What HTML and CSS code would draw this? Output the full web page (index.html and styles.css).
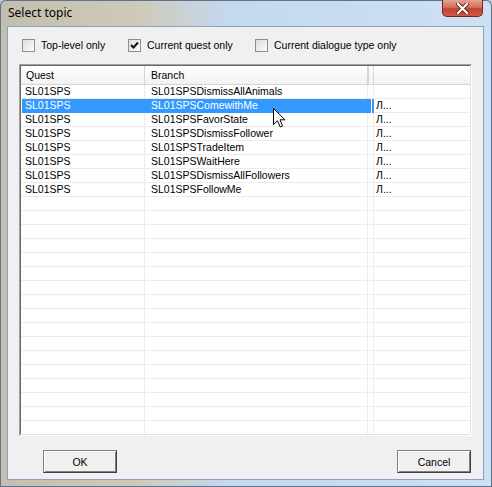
FILE: index.html
```html
<!DOCTYPE html>
<html lang="en">
<head>
  <meta charset="UTF-8">
  <title>Select topic</title>
  <link rel="stylesheet" href="styles.css">
</head>
<body>
  <div class="window">
    <!-- barra de título -->
    <div class="titlebar">
      <span class="title">Select topic</span>
      <button class="close">
        <svg width="13" height="11" viewBox="0 0 13 11">
          <path d="M2 1 L11 10 M11 1 L2 10" stroke="#5a1f18" stroke-width="4" stroke-linecap="square"/>
          <path d="M2 1 L11 10 M11 1 L2 10" stroke="#fff" stroke-width="2.2" stroke-linecap="square"/>
        </svg>
      </button>
    </div>

    <div class="client">
      <!-- filtros -->
      <div class="filters">
        <label class="check"><span class="box"></span>Top-level only</label>
        <label class="check"><span class="box checked">
          <svg width="9" height="9" viewBox="0 0 9 9"><path d="M1 4 L3.5 6.5 L8 1.5" fill="none" stroke="#111" stroke-width="2"/></svg>
        </span>Current quest only</label>
        <label class="check"><span class="box"></span>Current dialogue type only</label>
      </div>

      <!-- lista de tópicos -->
      <div class="list">
        <div class="list-inner">
          <div class="list-head">
            <div class="hcell">Quest</div>
            <div class="hcell">Branch</div>
            <div class="hcell"></div>
            <div class="hcell"></div>
          </div>
          <div class="list-body">
            <div class="row"><div class="cell">SL01SPS</div><div class="cell">SL01SPSDismissAllAnimals</div><div class="cell"></div><div class="cell"></div></div>
            <div class="row selected"><div class="cell">SL01SPS</div><div class="cell">SL01SPSComewithMe</div><div class="cell mini"></div><div class="cell">Л...</div></div>
            <div class="row"><div class="cell">SL01SPS</div><div class="cell">SL01SPSFavorState</div><div class="cell"></div><div class="cell">Л...</div></div>
            <div class="row"><div class="cell">SL01SPS</div><div class="cell">SL01SPSDismissFollower</div><div class="cell"></div><div class="cell">Л...</div></div>
            <div class="row"><div class="cell">SL01SPS</div><div class="cell">SL01SPSTradeItem</div><div class="cell"></div><div class="cell">Л...</div></div>
            <div class="row"><div class="cell">SL01SPS</div><div class="cell">SL01SPSWaitHere</div><div class="cell"></div><div class="cell">Л...</div></div>
            <div class="row"><div class="cell">SL01SPS</div><div class="cell">SL01SPSDismissAllFollowers</div><div class="cell"></div><div class="cell">Л...</div></div>
            <div class="row"><div class="cell">SL01SPS</div><div class="cell">SL01SPSFollowMe</div><div class="cell"></div><div class="cell">Л...</div></div>
          </div>
        </div>
      </div>

      <div class="buttons">
        <button class="btn">OK</button>
        <button class="btn">Cancel</button>
      </div>
    </div>

    <!-- ponteiro do mouse -->
    <svg class="cursor" width="13" height="20" viewBox="0 0 13 20">
      <path d="M0.5 0.5 L0.5 16.5 L4.5 12.8 L7.2 19 L9.6 18 L7 11.8 L12 11.8 Z" fill="#fff" stroke="#000" stroke-width="1"/>
    </svg>
  </div>
</body>
</html>
```

FILE: styles.css
```css
body {
  margin: 0;
  background-color: #b9c6d3;
  font-family: "Liberation Sans", Arial, sans-serif;
  font-size: 10.5px;
  color: #000;
}
.window {
  position: relative;
  width: 492px;
  height: 487px;
  display: flex;
  flex-direction: column;
  border-radius: 6px 6px 0 0;
  background: linear-gradient(to right, #c3bfae 0, #cfcab7 28%, #c4d8ee 46%, #cde0f4 100%);
  box-shadow: inset 0 0 0 1px #5d7390;
  overflow: hidden;
}
.titlebar {
  height: 26px;
  display: flex;
  align-items: flex-start;
  flex-shrink: 0;
}
.title {
  font-family: "Noto Sans", sans-serif;
  font-size: 12px;
  padding: 4px 0 0 8px;
  color: #000;
}
.close {
  margin-left: auto;
  margin-right: 9px;
  width: 41px;
  height: 17px;
  padding: 0;
  border: 1px solid #6f2a22;
  border-top: none;
  border-radius: 0 0 5px 5px;
  background: linear-gradient(#e6a396 0, #d6705f 45%, #c2432f 55%, #cc5a45 100%);
  display: flex;
  justify-content: center;
  align-items: center;
}
.client {
  margin: 0 8px 7px 7px;
  height: 454px;
  background-color: #f0f0f0;
  border: 1px solid #8aa2c0;
  box-sizing: border-box;
  display: flex;
  flex-direction: column;
}
.filters {
  display: grid;
  grid-template-columns: 106px 127px auto;
  padding: 11px 0 0 14px;
  height: 37px;
  box-sizing: border-box;
}
.check {
  display: flex;
  align-items: center;
  height: 14px;
}
.box {
  width: 11px;
  height: 11px;
  border: 1px solid #8f8f8f;
  background: linear-gradient(135deg, #dcdcdc, #fdfdfd);
  margin-right: 6px;
  display: flex;
  justify-content: center;
  align-items: center;
}
.list {
  margin-left: 11px;
  width: 453px;
  height: 372px;
  box-sizing: border-box;
  border: 1px solid;
  border-color: #a0a0a0 #fff #fff #a0a0a0;
}
.list-inner {
  height: 100%;
  box-sizing: border-box;
  border: 1px solid;
  border-color: #696969 #e3e3e3 #e3e3e3 #696969;
  background-color: #fff;
  display: flex;
  flex-direction: column;
}
.list-head, .row {
  display: grid;
  grid-template-columns: 124px 223px 6px 1fr;
}
.list-head {
  height: 18px;
  background: linear-gradient(#ffffff, #f2f2f2);
  border-bottom: 1px solid #d5d5d5;
}
.hcell {
  line-height: 18px;
  padding-left: 5px;
  border-right: 1px solid #d5d5d5;
}
.hcell:nth-child(2) {
  padding-left: 6px;
}
.hcell:nth-child(3) {
  padding-left: 0;
  border-left: 1px solid #d5d5d5;
}
.hcell:last-child {
  border-right: none;
}
.list-body {
  flex: 1;
  background:
    linear-gradient(to right, transparent 123px, #ececec 123px, #ececec 124px, transparent 124px,
      transparent 346px, #ececec 346px, #ececec 347px, transparent 347px,
      transparent 352px, #ececec 352px, #ececec 353px, transparent 353px),
    repeating-linear-gradient(to bottom, transparent 0, transparent 13px, #ececec 13px, #ececec 14px);
}
.row {
  height: 14px;
}
.cell {
  line-height: 13px;
  padding-left: 4px;
  white-space: nowrap;
  overflow: hidden;
}
.cell:nth-child(2) {
  padding-left: 6px;
}
.cell:nth-child(4) {
  padding-left: 2px;
}
.selected .cell:nth-child(1),
.selected .cell:nth-child(2) {
  background-color: #3399ff;
  color: #fff;
}
.selected .cell:nth-child(1) {
  margin-left: 1px;
  padding-left: 3px;
}
.mini {
  background: linear-gradient(to right, #3399ff 0 3px, #fff 3px 4px, #3399ff 4px 6px);
}
.buttons {
  display: flex;
  justify-content: space-between;
  padding: 0 12px 0 35px;
  margin-top: 14px;
}
.btn {
  width: 74px;
  height: 23px;
  font-family: "Liberation Sans", Arial, sans-serif;
  font-size: 10.5px;
  color: #000;
  background-color: #f0f0f0;
  border: 1px solid;
  border-color: #808080 #404040 #404040 #808080;
  box-shadow: inset 1px 1px 0 #fff, inset -1px -1px 0 #808080;
  padding: 0;
}
.cursor {
  position: absolute;
  left: 273px;
  top: 108px;
}
```
